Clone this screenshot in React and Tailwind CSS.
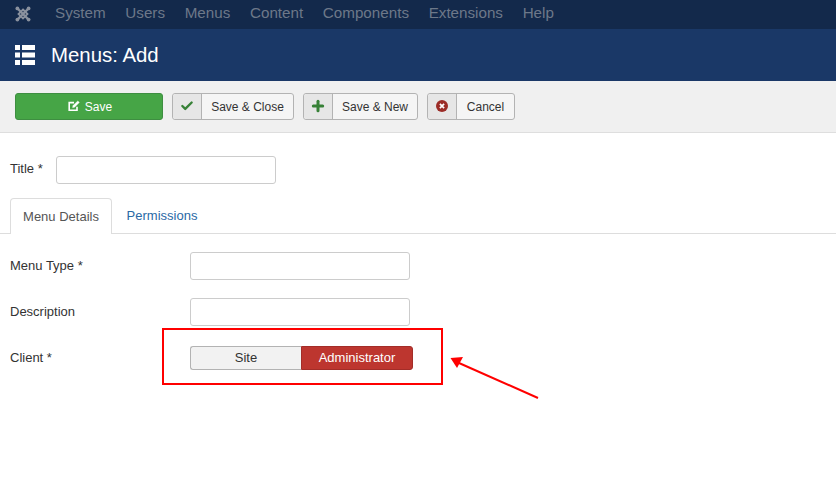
import { Check, Plus } from 'lucide-react'

const MENU_ITEMS = ['System', 'Users', 'Menus', 'Content', 'Components', 'Extensions', 'Help']

function JoomlaLogo() {
  return (
    <svg width="18" height="18" viewBox="0 0 18 18" fill="none" stroke="#8a919e">
      <path d="M4 4 L14 14 M14 4 L4 14" strokeWidth="2.4" />
      <path d="M9 4.5 L13.5 9 L9 13.5 L4.5 9 Z" strokeWidth="1.8" />
      <circle cx="3.4" cy="3.4" r="1.9" fill="#8a919e" stroke="none" />
      <circle cx="14.6" cy="3.4" r="1.9" fill="#8a919e" stroke="none" />
      <circle cx="3.4" cy="14.6" r="1.9" fill="#8a919e" stroke="none" />
      <circle cx="14.6" cy="14.6" r="1.9" fill="#8a919e" stroke="none" />
    </svg>
  )
}

function ListIcon() {
  return (
    <svg width="20" height="20" viewBox="0 0 20 20" fill="#fff">
      <rect x="0" y="0" width="5" height="5" />
      <rect x="7" y="0" width="13" height="5" />
      <rect x="0" y="7.5" width="5" height="5" />
      <rect x="7" y="7.5" width="13" height="5" />
      <rect x="0" y="15" width="5" height="5" />
      <rect x="7" y="15" width="13" height="5" />
    </svg>
  )
}

function EditIcon() {
  return (
    <svg width="12" height="12" viewBox="0 0 12 12" fill="none" stroke="#fff">
      <path d="M9 6.8 V10.2 H1.2 V2.6 H6" strokeWidth="1.6" />
      <path d="M4.6 7.6 L5 5.6 L9.8 0.9 L11.3 2.4 L6.6 7.2 Z" fill="#fff" strokeWidth="0.4" />
    </svg>
  )
}

function CancelIcon() {
  return (
    <svg width="12" height="12" viewBox="0 0 12 12">
      <circle cx="6" cy="6" r="6" fill="#9b2c27" />
      <path d="M3.9 3.9 L8.1 8.1 M8.1 3.9 L3.9 8.1" stroke="#fff" strokeWidth="1.7" />
    </svg>
  )
}

function ToolbarButton({ icon, label, textWidth }) {
  return (
    <button className="flex h-[27px] items-stretch rounded-[3px] border border-[#b3b3b3] bg-[#f5f5f5] text-[12px] text-[#333]">
      <span className="flex w-[29px] items-center justify-center rounded-l-[3px] border-r border-[#b3b3b3] bg-[#e6e6e6]">
        {icon}
      </span>
      <span className={`flex items-center justify-center pt-[1px] ${textWidth}`}>{label}</span>
    </button>
  )
}

function FieldRow({ label, children }) {
  return (
    <div className="flex items-center">
      <label className="w-[180px] text-[13px] text-[#333]">{label}</label>
      {children}
    </div>
  )
}

function TextInput({ width }) {
  return <input className={`h-[28px] rounded-[3px] border border-[#ccc] bg-white ${width}`} />
}

export default function App() {
  return (
    <div className="relative h-[500px] w-[836px] overflow-hidden bg-white font-['Liberation_Sans',Arial,sans-serif]">
      <nav className="flex h-[29px] items-center bg-[#13294b] pb-[2px] pl-[14px] text-[15.2px] text-[#6d7889]">
        <JoomlaLogo />
        <div className="ml-[23px] flex gap-[19.7px]">
          {MENU_ITEMS.map((item) => (
            <span key={item}>{item}</span>
          ))}
        </div>
      </nav>

      <header className="flex h-[52px] items-center bg-[#1a3867] pl-[15px] text-white">
        <ListIcon />
        <h1 className="ml-[16px] text-[20.4px]">Menus: Add</h1>
      </header>

      <div className="flex h-[52px] items-center gap-[9px] border-b border-[#dedede] bg-[#f0f0f0] pb-[1px] pl-[15px]">
        <button className="flex h-[27px] w-[148px] items-center justify-center gap-[5px] rounded-[3px] border border-[#3e8e41] bg-[#46a546] pl-[2px] text-[12px] text-white">
          <EditIcon />
          <span className="pt-[1px]">Save</span>
        </button>
        <ToolbarButton
          icon={<Check size={14} strokeWidth={4} color="#378137" />}
          label="Save & Close"
          textWidth="w-[91px]"
        />
        <ToolbarButton
          icon={<Plus size={16} strokeWidth={4.5} color="#378137" />}
          label="Save & New"
          textWidth="w-[84px]"
        />
        <ToolbarButton icon={<CancelIcon />} label="Cancel" textWidth="w-[57px]" />
      </div>

      <div className="flex items-center pl-[10px] pt-[23px]">
        <label className="w-[46px] pb-[2px] text-[13px] text-[#333]">Title *</label>
        <TextInput width="w-[220px]" />
      </div>

      <div className="mt-[14px] flex h-[36px] items-stretch border-b border-[#ddd] pl-[10px] text-[13px]">
        <span className="flex h-[36px] w-[102px] items-center justify-center rounded-t-[4px] border border-b-0 border-[#ddd] bg-white text-[#555]">
          Menu Details
        </span>
        <span className="flex w-[100px] items-center justify-center text-[#2a69a6]">Permissions</span>
      </div>

      <div className="flex flex-col pl-[10px] pt-[18px]">
        <FieldRow label="Menu Type *">
          <TextInput width="w-[220px]" />
        </FieldRow>
        <div className="mt-[18px]">
          <FieldRow label="Description">
            <TextInput width="w-[220px]" />
          </FieldRow>
        </div>
        <div className="mt-[20px]">
          <FieldRow label="Client *">
            <div className="flex h-[24px] w-[223px] text-[13px]">
              <span className="flex w-[111px] items-center justify-center rounded-l-[3px] border border-r-0 border-[#b3b3b3] bg-[#f2f2f2] text-[#333]">
                Site
              </span>
              <span className="flex flex-1 items-center justify-center rounded-r-[3px] border border-[#a32d28] bg-[#bd362f] text-white">
                Administrator
              </span>
            </div>
          </FieldRow>
        </div>
      </div>

      <div className="absolute left-[162px] top-[328px] h-[57px] w-[281px] border-2 border-[#f00]" />
      <svg className="absolute left-[445px] top-[350px]" width="100" height="55" viewBox="0 0 100 55" fill="none">
        <path d="M93 48 L14 13" stroke="#f00" strokeWidth="2" />
        <path d="M5.5 8 L18 7 L12 18 Z" fill="#f00" />
      </svg>
    </div>
  )
}
